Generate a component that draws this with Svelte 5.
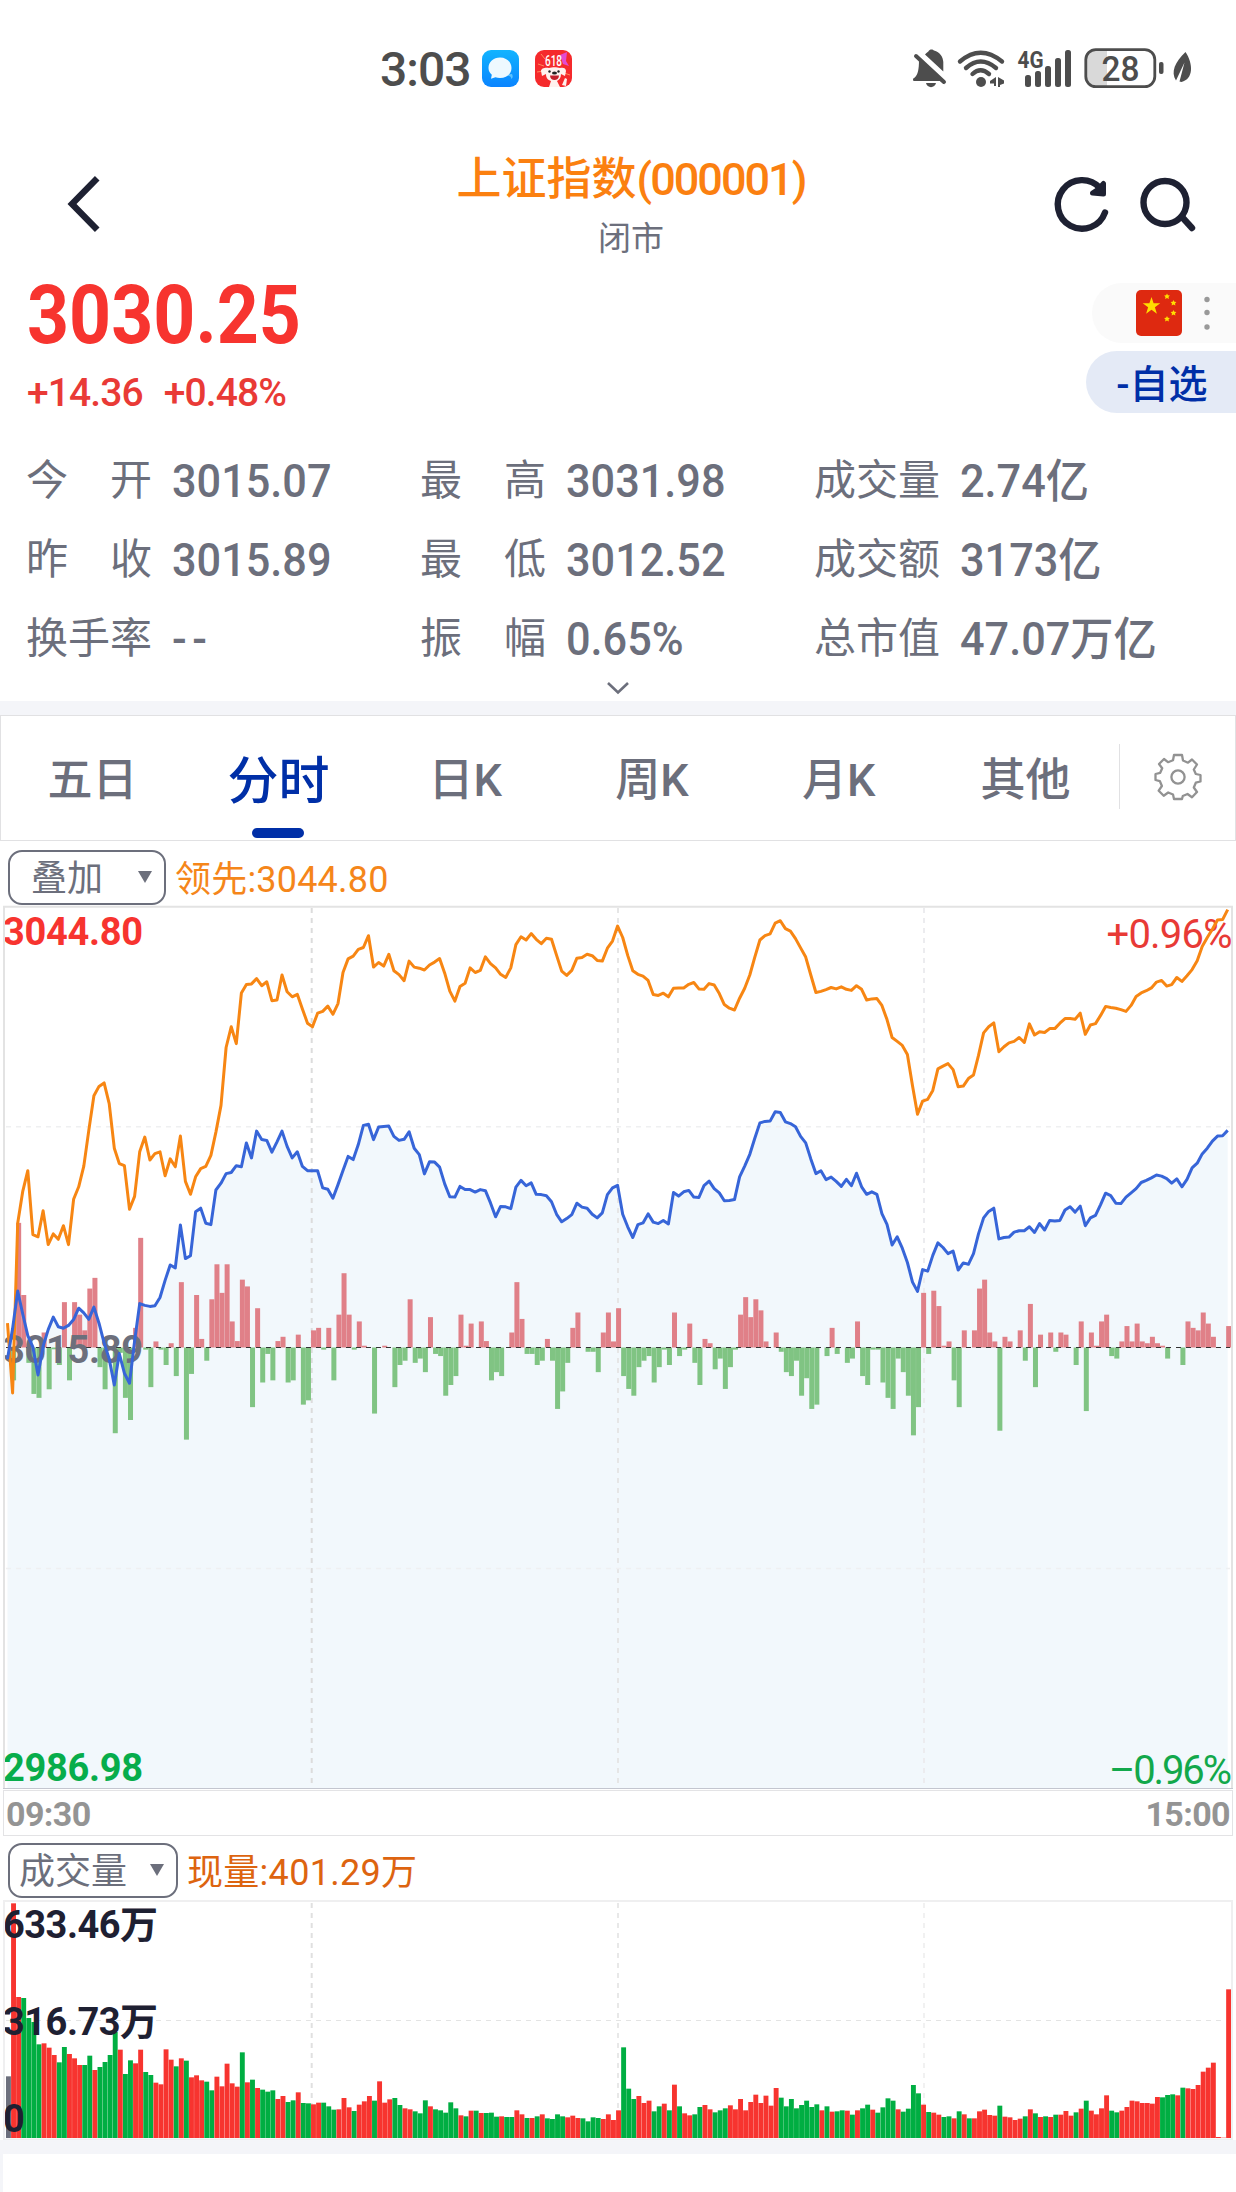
<script lang="ts">
	interface Stat {
		label: string;
		value: string;
	}

	const stats: Stat[] = [
		{ label: '今开', value: '3015.07' },
		{ label: '最高', value: '3031.98' },
		{ label: '成交量', value: '2.74亿' },
		{ label: '昨收', value: '3015.89' },
		{ label: '最低', value: '3012.52' },
		{ label: '成交额', value: '3173亿' },
		{ label: '换手率', value: '--' },
		{ label: '振幅', value: '0.65%' },
		{ label: '总市值', value: '47.07万亿' }
	];

	const tabs = ['五日', '分时', '日K', '周K', '月K', '其他'];
	let active = $state('分时');

	// one sample per minute, 09:30 - 15:00
	const STEP = 5.084;

	const lead = [
		1185, 1380, 905, 815, 758, 937, 943, 870, 965, 935, 950, 912, 965, 838, 803, 745, 645, 548, 522, 512,
		570, 695, 738, 744, 866, 830, 705, 664, 728, 710, 705, 772, 725, 747, 661, 788, 824, 775, 752, 746,
		715, 650, 575, 413, 355, 402, 260, 237, 235, 220, 240, 229, 282, 280, 210, 257, 271, 264, 305, 345,
		355, 317, 312, 297, 320, 290, 203, 165, 157, 138, 133, 100, 188, 175, 185, 152, 198, 209, 226, 171,
		188, 191, 196, 182, 174, 164, 205, 255, 283, 242, 233, 190, 203, 197, 159, 178, 190, 208, 217, 190,
		125, 103, 112, 94, 110, 122, 107, 110, 155, 199, 211, 197, 163, 161, 152, 156, 169, 171, 135, 115,
		73, 105, 155, 198, 208, 213, 225, 265, 267, 261, 271, 247, 246, 246, 236, 231, 249, 250, 234, 238,
		262, 293, 303, 308, 275, 247, 210, 160, 112, 100, 95, 65, 58, 80, 87, 108, 134, 160, 210, 259,
		256, 251, 245, 249, 243, 250, 253, 240, 250, 280, 277, 276, 295, 335, 385, 396, 407, 433, 520, 600,
		563, 558, 533, 473, 465, 458, 475, 523, 521, 500, 490, 435, 372, 355, 344, 425, 411, 400, 396, 385,
		399, 347, 378, 369, 371, 360, 360, 345, 332, 332, 334, 317, 376, 350, 346, 323, 298, 301, 303, 307,
		312, 295, 270, 260, 254, 246, 230, 225, 241, 237, 217, 228, 212, 195, 170, 130, 105, 82, 56, 55,
		27
	];

	const price = [
		1285, 1200, 1095, 1160, 1220, 1252, 1330, 1250, 1203, 1168, 1195, 1199, 1191, 1175, 1143, 1156, 1174, 1140, 1185, 1240,
		1285, 1358, 1270, 1325, 1353, 1235, 1130, 1135, 1138, 1136, 1113, 1065, 1022, 1030, 910, 1004, 996, 873, 863, 905,
		909, 812, 793, 766, 763, 744, 747, 680, 722, 647, 671, 673, 706, 677, 647, 690, 722, 705, 746, 758,
		758, 758, 806, 810, 835, 797, 757, 718, 727, 685, 631, 628, 671, 636, 634, 633, 662, 673, 670, 649,
		695, 713, 767, 733, 734, 748, 795, 831, 832, 802, 811, 811, 818, 811, 814, 848, 887, 858, 859, 864,
		804, 785, 800, 792, 824, 825, 828, 845, 880, 901, 892, 881, 849, 860, 863, 880, 890, 876, 825, 806,
		799, 880, 915, 945, 909, 904, 879, 902, 906, 897, 907, 819, 829, 817, 813, 832, 833, 800, 787, 808,
		820, 842, 841, 839, 775, 745, 712, 667, 624, 620, 619, 593, 595, 621, 626, 635, 662, 680, 725, 766,
		758, 783, 776, 788, 802, 782, 800, 765, 803, 824, 817, 824, 878, 908, 966, 943, 975, 1015, 1070, 1096,
		1035, 1039, 995, 960, 973, 990, 983, 1036, 1016, 1020, 990, 935, 890, 872, 863, 949, 945, 944, 930, 926,
		926, 915, 931, 906, 924, 897, 899, 897, 868, 859, 874, 857, 912, 890, 883, 853, 821, 828, 849, 850,
		832, 820, 808, 791, 785, 778, 770, 773, 780, 793, 781, 803, 782, 750, 737, 711, 695, 675, 661, 660,
		645
	];

	// buy / sell strength around the previous close
	const force = [
		0, -92, 349, 147, -43, -130, -141, 42, -117, -5, -49, 127, -92, 127, 92, 48, 165, 195, -55, -117,
		0, -240, -15, -141, -203, 55, 307, -6, -111, 17, -6, -49, 12, -80, 183, -258, -74, 147, 24, -37,
		135, 233, 153, 233, 73, 18, 190, 171, -167, 110, -98, -18, -92, 18, 30, -98, -92, 36, -160, -148,
		48, 55, -6, 55, -92, 92, 208, 92, -6, 73, 5, 0, -185, 0, 5, 0, -111, -49, -37, 135,
		-43, -31, -69, 85, -18, -24, -135, -105, -80, 92, 5, 67, 0, 73, 18, -92, -69, -80, 0, 42,
		183, 80, -18, -18, -49, -37, 24, -37, -172, -123, -43, 55, 98, 0, -12, -12, -69, 42, 98, 17,
		110, -80, -116, -135, -55, -37, -24, -98, -55, -6, -49, 98, -24, -6, 67, -43, -105, 24, 12, -61,
		-31, -116, -55, -6, 92, 141, 85, 135, 104, 17, 0, 42, -12, -69, -80, -37, -135, -86, -172, -160,
		0, -24, 55, -18, 0, -43, -31, 73, -80, -105, -6, -6, -98, -141, -172, -31, -69, -135, -246, -167,
		153, -18, 159, 116, 5, 17, -92, -167, 48, 0, 48, 165, 190, 42, 17, -233, 30, 17, 0, 48,
		-37, 122, -111, 36, 0, 42, -12, 42, 36, 0, -49, 73, -178, 42, 5, 73, 92, -24, -31, 17,
		60, 17, 67, 17, 12, 30, 12, 5, -31, 0, 0, -49, 73, 55, 48, 98, 67, 30, 0, 0,
		60
	];

	// negative = traded on the way down
	const volume = [
		185, 704, 423, -420, -360, -348, -281, 284, 271, 249, -227, -273, 252, 239, 219, -219, -247, 204, -213, -228,
		-249, -318, 265, -192, -233, 224, 265, -198, -189, 166, 161, 266, 235, -215, 239, -232, 182, 188, 173, -169,
		-143, 184, 155, 223, 164, 154, -257, 167, -175, 150, -145, -139, -143, 117, 126, -108, -113, 137, -105, -104,
		101, 106, -106, -95, -85, 86, 120, 92, -81, 100, 110, 126, -112, 170, 106, 116, -120, -99, 89, 86,
		-80, -74, -113, 95, -86, -83, -76, -107, -89, 68, -65, 82, -82, 75, -75, -76, -64, 65, -63, -63,
		83, 71, -60, 60, -65, 71, -59, -57, -71, -65, 62, 67, 60, -59, -50, -62, -60, 57, 71, 54,
		83, -272, -148, -117, 126, 105, 112, -80, -95, 103, -83, 160, -95, 74, 68, -71, -93, 99, 86, -77,
		-83, -89, 98, 86, 117, 83, 108, 130, 105, 127, 97, 150, -121, -95, -117, -89, -99, -112, -93, -101,
		83, -95, 79, -80, -83, 82, -70, 83, -89, -100, 85, -76, -92, -119, -112, 86, -79, -88, -159, -134,
		100, -78, 76, 70, -63, -65, 59, -80, 71, -59, 59, 80, 85, 69, 67, -97, 64, 62, 54, 58,
		-65, 86, -74, 63, -65, 63, -70, 70, 81, 67, -77, 88, -112, 82, 71, 89, 128, -82, -77, 82,
		93, 112, 110, 105, 105, 103, 123, -122, -129, -131, 128, -151, 149, 147, 159, 199, 211, 226, 3, 1,
		446
	];

	const x = (i: number) => (4.5 + i * STEP).toFixed(1);
	const toLine = (samples: number[]) => samples.map((v, i) => `${x(i)},${(v / 2.8 - 6).toFixed(1)}`).join(' ');

	const leadLine = toLine(lead);
	const priceLine = toLine(price);
	const priceArea = `${x(0)},882 ${priceLine} ${x(240)},882`;

	const volumeColor = (v: number, i: number) => (i === 0 ? '#6c6f7c' : v < 0 ? '#00ae42' : '#f7342f');
</script>

<div class="page">
	<div class="status">
		<div class="status-left">
			<span class="clock">3:03</span>
			<svg width="37" height="37" viewBox="0 0 37 37">
				<defs>
					<linearGradient id="chat" x1="0" y1="0" x2="0" y2="1">
						<stop offset="0" stop-color="#12b4ff" />
						<stop offset="1" stop-color="#0a84ff" />
					</linearGradient>
				</defs>
				<rect width="37" height="37" rx="9" fill="url(#chat)" />
				<path d="M21 25c5 0 9 1 8 4 2-1 2-3 1-5" fill="#5cc3ff" />
				<path d="M18 7.500c6.500 0 11.500 4.600 11.500 10.500S24.500 28 18 28c-1.700 0-3.200-.3-4.600-.8L9 28.700l.8-4C7.700 23 6.500 20.700 6.500 18 6.500 12 11.500 7.500 18 7.500z" fill="#eef9ff" />
			</svg>
			<svg class="promo" width="37" height="37" viewBox="0 0 37 37">
				<rect width="37" height="37" rx="9" fill="#f52a2c" />
				<path d="M25 5l7-3-1 9 3 5-6-2z" fill="#e34bd0" />
				<path d="M3 14l6 2M2 22l7-1M29 23l6 2M6 4l4 5" stroke="#ff8a5c" stroke-width="1" />
				<text x="10" y="16" font-size="14" font-weight="500" textLength="17" lengthAdjust="spacingAndGlyphs" fill="#fff">618</text>
				<path d="M6 21c0-3 5-4 8-3 3-1 8-1 11 0 3-1 6 0 6 3l-1 5-4-2c0 4-2 6-4 7l3 6H14l2-6c-3-1-5-3-5-7l-4 2z" fill="#fff1ee" />
				<path d="M27 35l3-7 2 1-1 7z" fill="#fff1ee" />
				<circle cx="14.500" cy="21.500" r="1.200" fill="#222" />
				<circle cx="23.500" cy="21.500" r="1.200" fill="#222" />
				<ellipse cx="19.500" cy="23" rx="2.500" ry="1.500" fill="#222" />
				<path d="M15 25.500h9c0 6-9 6-9 0z" fill="#c21f2a" />
			</svg>
		</div>
		<svg class="status-right" width="284" height="44" viewBox="0 0 284 44" fill="#4d4d4d">
			<!-- muted bell -->
			<path d="M13 6.500C14.500 4.500 16.500 4 17 2.500c1-1.500 4-1.500 5 0C28 4 31 9 31.300 14v9.500z" />
			<path d="M7 12l26 25-5-4H2.500c-2 0-2-2.600 0-3.300C6 27 7 21 7 12z" />
			<path d="M4 8l28 26" stroke="#4d4d4d" stroke-width="4" stroke-linecap="round" />
			<path d="M14 35h10c-1 5.500-9 5.500-10 0z" />
			<!-- wifi -->
			<g fill="none" stroke="#4d4d4d" stroke-width="4.400" stroke-linecap="round">
				<path d="M48 13.500Q68.500-4 90 13.500" />
				<path d="M54 20Q68.500 7 84 20" />
				<path d="M60.500 26Q68.500 18.500 77 26" />
			</g>
			<circle cx="69" cy="34" r="5" />
			<path d="M84 29v9h-2v-2.500h-4V33zM86 29l6 3.500v3l-4 1.500v2h-2z" />
			<!-- signal -->
			<text x="105.500" y="19.500" font-size="24" font-weight="700" textLength="26" lengthAdjust="spacingAndGlyphs">4G</text>
			<rect x="113" y="27" width="6" height="12" rx="2.500" />
			<rect x="123" y="23" width="6" height="16" rx="2.500" />
			<rect x="133" y="18" width="6" height="21" rx="2.500" />
			<rect x="143" y="10" width="6" height="29" rx="2.500" />
			<rect x="153" y="2" width="6" height="37" rx="2.500" />
			<!-- battery -->
			<path d="M184 2.500h11v35.500h-11a9 9 0 0 1-9-9v-18a9 9 0 0 1 9-9z" fill="#d9d9d9" />
			<rect x="173.800" y="1.600" width="69" height="37" rx="10" fill="none" stroke="#4d4d4d" stroke-width="2.800" />
			<text x="189.500" y="32.500" font-size="35" font-weight="500" textLength="38" lengthAdjust="spacingAndGlyphs">28</text>
			<rect x="247" y="14" width="4.500" height="12" rx="2" />
			<!-- leaf -->
			<path d="M273.500 4c8 12 8 27-4 30l-2-.5 5-19-8.500 18C258.500 24 263 14 273.500 4z" />
		</svg>
	</div>

	<header>
		<svg class="back" width="34" height="60" viewBox="0 0 34 60">
			<path d="M29 6.500L6 30l23 23.500" fill="none" stroke="#1e2132" stroke-width="6.400" stroke-linecap="square" />
		</svg>
		<div class="heading">
			<h1>上证指数<span>(000001)</span></h1>
			<p>闭市</p>
		</div>
		<div class="actions">
			<svg width="56" height="60" viewBox="0 0 56 60" fill="none" stroke="#1e2132" stroke-width="6.400" stroke-linecap="round">
				<path d="M51 38.500A24.300 24.300 0 1 1 46 14" />
				<path d="M49.500 9.500v10.500l-11-1 6-4z" stroke-linejoin="round" stroke-width="5" fill="#1e2132" />
			</svg>
			<svg width="58" height="60" viewBox="0 0 58 60" fill="none" stroke="#1e2132" stroke-width="6.400" stroke-linecap="round">
				<circle cx="25" cy="28.500" r="21.500" />
				<path d="M42 43l10 11" />
			</svg>
		</div>
	</header>

	<section class="quote">
		<div class="quote-text">
			<div class="last">3030.25</div>
			<div class="change"><span>+14.36</span><span>+0.48%</span></div>
		</div>
		<div class="quote-side">
			<div class="market">
				<svg width="46" height="46" viewBox="0 0 46 46" fill="#ffde00">
					<rect width="46" height="46" rx="5" fill="#de2910" />
					<path d="M15.500 7l2.100 6.300h6.700l-5.400 4 2 6.400-5.400-3.900-5.400 3.900 2-6.400-5.400-4h6.700z" />
					<path id="star" d="M31 3.500l.9 1.800 2 .2-1.400 1.500.4 2-1.900-.9-1.900.9.400-2-1.400-1.500 2-.2z" />
					<use href="#star" x="6.500" y="6.500" />
					<use href="#star" x="6.500" y="16.500" />
					<use href="#star" y="22.500" />
				</svg>
				<svg class="more" width="8" height="36" viewBox="0 0 8 36" fill="#999">
					<circle cx="4" cy="4.500" r="2.700" />
					<circle cx="4" cy="17.500" r="2.700" />
					<circle cx="4" cy="32" r="2.700" />
				</svg>
			</div>
			<button class="favorite">-自选</button>
		</div>
	</section>

	<section class="stats">
		{#each stats as stat}
			<div class="stat">
				<div class="label">
					{#each stat.label as char}<span>{char}</span>{/each}
				</div>
				<div class="value" class:empty={stat.value === '--'}>{stat.value}</div>
			</div>
		{/each}
	</section>
	<div class="expand">
		<svg width="26" height="14" viewBox="0 0 26 14"><path d="M3 2l10 9.500L23 2" fill="none" stroke="#6c6f7c" stroke-width="2.600" /></svg>
	</div>

	<nav>
		{#each tabs as tab}
			<button class="tab" class:active={tab === active} onclick={() => (active = tab)}>{tab}</button>
		{/each}
		<div class="settings">
			<svg width="48" height="48" viewBox="0 0 48 48" fill="none" stroke="#929292" stroke-width="2.300" stroke-linejoin="round">
				<path d="M20 2h8l1 5.500 5 2.200 4-3.200 5 5-3.200 5 2 4.500 4.700 1v6.500l-4.700 1.200-2 4.800 3.200 4.500-5 5.200-4.500-3.200-4.700 2L28 46h-8l-1-4.500-4.800-2-4.500 3.200-5-5 3.200-4.700-2-4.800L1.500 27v-6l4.700-1.200 2-4.600L5 11l5-5 4 3.200 5-2z" />
				<circle cx="24" cy="24" r="6.600" />
			</svg>
		</div>
	</nav>

	<div class="toolbar">
		<button class="select overlay"><span>叠加</span><i></i></button>
		<span class="lead">领先:3044.80</span>
	</div>

	<svg class="trend" width="1230" height="883" viewBox="0 0 1230 883">
		<polygon points={priceArea} fill="#f2f8fc" />
		<g stroke="#dcdcdc" stroke-width="2" stroke-dasharray="5 5">
			<path d="M308.700 2V878" />
			<path d="M615 2V878" stroke="#e6e6e6" />
			<path d="M921 2V878" stroke="#ececef" />
		</g>
		<path d="M3 220.800H1227M3 662.500H1227" stroke="#eff0f1" stroke-width="1.500" stroke-dasharray="5 5" />
		{#each force as v, i}
			<rect x={3 + i * STEP} y={v > 0 ? 441.500 - v / 2.8 : 441.500} width="5" height={Math.abs(v) / 2.8} fill={v > 0 ? '#e08088' : '#80c483'} />
		{/each}
		<path d="M3 441.500H1227" stroke="#333" stroke-dasharray="5 5" />
		<g class="axis">
			<text x="0" y="38.500" textLength="140" fill="#f7342f">3044.80</text>
			<text x="0" y="457" textLength="140" fill="#6c6f7c">3015.89</text>
			<text x="0" y="875" textLength="140" fill="#07ad4b">2986.98</text>
		</g>
		<g class="percent">
			<text x="1103.500" y="42" textLength="126" fill="#e83a36">+0.96%</text>
			<text x="1106" y="878" textLength="123" fill="#12a84b">–0.96%</text>
		</g>
		<polyline points={leadLine} fill="none" stroke="#f78613" stroke-width="3" stroke-linejoin="round" />
		<polyline points={priceLine} fill="none" stroke="#3765d8" stroke-width="3" stroke-linejoin="round" />
		<path d="M0 0.800H1230M1 0V882M1229 0V882" stroke="#e3e3e3" stroke-width="2" />
		<path d="M0 882.500H1230" stroke="#c3c6cf" />
	</svg>
	<div class="times"><span>09:30</span><span>15:00</span></div>

	<div class="toolbar lower">
		<button class="select volume"><span>成交量</span><i></i></button>
		<span class="current">现量:401.29万</span>
	</div>

	<svg class="trend" width="1230" height="240" viewBox="0 0 1230 240">
		<g stroke="#e0e0e0" stroke-width="2" stroke-dasharray="5 5">
			<path d="M308.700 3V238" />
			<path d="M615 3V238" stroke="#e8e8e8" />
			<path d="M921 3V238" stroke="#f1f1f1" />
		</g>
		<path d="M3 120.500H1221" stroke="#e4e4e4" stroke-dasharray="5 5" />
		{#each volume as v, i}
			<rect x={3 + i * STEP} y={238 - Math.abs(v) / 3} width="4.900" height={Math.abs(v) / 3} fill={volumeColor(v, i)} />
		{/each}
		<g class="axis" fill="#1e2032">
			<text x="0" y="38" textLength="155">633.46万</text>
			<text x="0" y="135" textLength="155">316.73万</text>
			<text x="0" y="232">0</text>
		</g>
		<path d="M0 1H1230M1 0V240M1229 0V240M0 239.500H1230" fill="none" stroke="#efeff0" stroke-width="2" />
	</svg>
	<div class="foot"></div>
</div>

<style>
	:global(body) {
		background: #fff;
	}

	.page {
		width: 1236px;
		height: 2192px;
		display: flex;
		flex-direction: column;
		overflow: hidden;
		background: #fff;
		color: #6c6f7c;
		font-family: Roboto, "Noto Sans CJK SC", sans-serif;
	}

	.page > * {
		flex-shrink: 0;
		box-sizing: border-box;
	}

	svg {
		display: block;
		overflow: visible;
	}

	button {
		padding: 0;
		border: 0;
		background: none;
		color: inherit;
		font: inherit;
	}

	.status {
		height: 136px;
		display: flex;
		align-items: center;
		justify-content: space-between;
		padding: 0 40px 0 380px;
	}

	.status-left {
		display: flex;
		align-items: center;
	}

	.status-right {
		margin-top: 3px;
	}

	.clock {
		width: 102px;
		color: #4d4d4d;
		font-size: 48px;
		font-weight: 500;
		line-height: 1;
		letter-spacing: -1px;
		padding-top: 3px;
		box-sizing: border-box;
	}

	.promo {
		margin-left: 16px;
	}

	header {
		height: 136px;
		display: grid;
		grid-template-columns: 238px 1fr 212px;
	}

	.back {
		margin: 38px 0 0 66px;
	}

	.heading {
		padding-top: 19px;
		text-align: center;
	}

	h1 {
		margin: 0 -10px;
		color: #fb8010;
		font-size: 45px;
		font-weight: 500;
		line-height: 50px;
	}

	h1 span {
		letter-spacing: -2px;
	}

	.heading p {
		margin: 10px 0 0;
		font-size: 33px;
		line-height: 48px;
	}

	.actions {
		display: flex;
		gap: 30px;
		padding: 38px 0 0 30px;
	}

	.quote {
		height: 168px;
		display: flex;
		justify-content: space-between;
		padding-left: 27px;
	}

	.last {
		margin-top: 1px;
		color: #f7342f;
		font-size: 82px;
		font-weight: 700;
		line-height: 84px;
		transform: scaleX(0.895);
		transform-origin: left;
	}

	.change {
		display: flex;
		gap: 21px;
		margin-top: 13px;
		color: #e93a36;
		font-size: 39px;
		font-weight: 500;
		line-height: 46px;
		letter-spacing: -0.9px;
	}

	.quote-side {
		display: flex;
		flex-direction: column;
		align-items: flex-end;
		padding-top: 11px;
	}

	.market {
		width: 144px;
		height: 60px;
		display: flex;
		align-items: center;
		box-sizing: border-box;
		padding-left: 44px;
		border-radius: 30px 0 0 30px;
		background: #fafafa;
	}

	.more {
		margin-left: 21px;
	}

	.favorite {
		width: 150px;
		height: 62px;
		margin-top: 8px;
		padding: 0 0 3px 2px;
		border-radius: 31px 0 0 31px;
		background: #e4eaf6;
		color: #002fa7;
		font-size: 39px;
		font-weight: 500;
	}

	.stats {
		height: 237px;
		display: grid;
		grid-template-columns: repeat(3, 394px);
		grid-auto-rows: 79px;
		padding: 1px 0 0 26px;
	}

	.stat {
		display: flex;
		align-items: center;
		gap: 20px;
		white-space: nowrap;
	}

	.label {
		width: 126px;
		display: flex;
		justify-content: space-between;
		font-size: 42px;
		line-height: 60px;
	}

	.value {
		font-size: 46px;
		font-weight: 500;
		line-height: 60px;
		transform: scaleX(0.94);
		transform-origin: left;
	}

	.value.empty {
		letter-spacing: 6px;
	}

	.expand {
		height: 24px;
		display: flex;
		justify-content: center;
		padding-top: 4px;
	}

	nav {
		height: 140px;
		display: flex;
		border-top: 14px solid #f4f5f9;
		border-bottom: 1px solid #e1e1e3;
		box-shadow: inset 0 1px #e1e1e3, inset 1px 0 #e1e1e3, inset -1px 0 #e1e1e3;
	}

	.tab {
		position: relative;
		width: 186.800px;
		padding-bottom: 2px;
		font-size: 45px;
		font-weight: 500;
	}

	.tab:first-child {
		width: 185px;
	}

	.tab.active {
		color: #002fa7;
		font-size: 51px;
	}

	.tab.active::after {
		content: '';
		position: absolute;
		left: 50%;
		bottom: 2px;
		width: 52px;
		height: 10px;
		margin-left: -26px;
		border-radius: 5px;
		background: #002fa7;
	}

	.settings {
		flex: 1;
		height: 65px;
		display: flex;
		align-items: center;
		justify-content: center;
		box-sizing: border-box;
		margin-top: 29px;
		padding-left: 1px;
		border-left: 1px solid #e1e1e3;
	}

	.toolbar {
		height: 65px;
		display: flex;
		align-items: center;
		padding: 7px 0 0 8px;
		font-size: 36px;
		line-height: 1;
	}

	.toolbar.lower {
		height: 64px;
		padding-top: 4px;
	}

	.select {
		height: 55px;
		display: flex;
		align-items: center;
		justify-content: space-between;
		box-sizing: border-box;
		padding: 0 12px 0 21px;
		border: 2px solid #6c6f7c;
		border-radius: 14px;
	}

	.select span {
		padding-top: 4px;
	}

	.select.overlay {
		width: 158px;
	}

	.select.volume {
		width: 170px;
		padding-left: 9px;
	}

	.select i {
		border: 7px solid transparent;
		border-top: 12px solid #6c6f7c;
		border-bottom: 0;
	}

	.lead {
		margin-left: 9px;
		padding-top: 5px;
		color: #f5861a;
		letter-spacing: 0.2px;
	}

	.current {
		margin-left: 9px;
		padding-top: 5px;
		color: #dd6410;
		letter-spacing: 0.3px;
	}

	.trend {
		margin-left: 3px;
	}

	.axis {
		font-size: 38px;
		font-weight: 700;
	}

	.percent {
		font-size: 40px;
	}

	.times {
		height: 46px;
		display: flex;
		align-items: center;
		justify-content: space-between;
		margin: 1px 3px 0;
		padding: 2px 2px 0;
		border: 1px solid #e3e3e5;
		color: #949494;
		font-size: 34px;
		font-weight: 700;
		letter-spacing: -0.6px;
	}

	.foot {
		flex: 1;
		border-top: 14px solid #f4f5f9;
		border-left: 3px solid #f4f5f9;
	}
</style>
